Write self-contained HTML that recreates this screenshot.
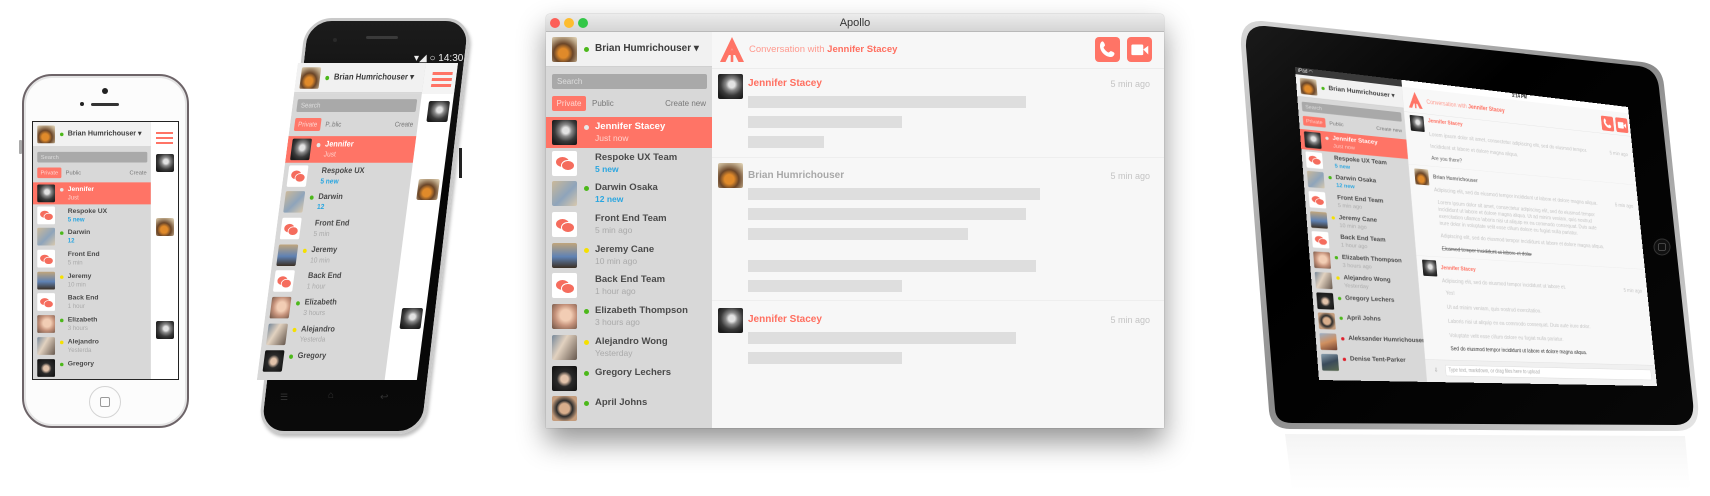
<!DOCTYPE html>
<html><head><meta charset="utf-8">
<style>
*{box-sizing:border-box;margin:0;padding:0}
body{width:1710px;height:496px;background:#fff;position:relative;overflow:hidden;font-family:"Liberation Sans",sans-serif}
.abs{position:absolute}
.av{position:absolute;width:25px;height:25px;border-radius:2px;overflow:hidden}
.aj{background:radial-gradient(circle at 55% 42%,#e2e2e2 0 16%,#8a8a8a 30%,#3a3a3a 55%,#1c1c1c 80%)}
.ab{background:radial-gradient(circle at 45% 65%,#e08a2a 0 22%,#6a4528 45%,#b9a384 75%,#e8dcc0)}
.ad{background:linear-gradient(135deg,#cbb99a,#8ea4bb 55%,#d9c9ae)}
.ajc{background:linear-gradient(#c0a57c,#5f82b4 55%,#3c3024)}
.ae{background:radial-gradient(circle at 55% 45%,#f2cdb4 0 28%,#c4917a 55%,#6a5244)}
.aa{background:linear-gradient(120deg,#76889a,#e2d2c0 40%,#66584e)}
.ag{background:radial-gradient(circle at 50% 52%,#e2c3ab 0 20%,#2a2a2a 42%,#0e0e0e)}
.ap{background:radial-gradient(circle at 50% 50%,#d8ae8c 0 28%,#2c2c2c 45%,#c49c7c 75%)}
.ak{background:linear-gradient(160deg,#9ab0c8,#d09060 50%,#704030)}
.an{background:linear-gradient(160deg,#8aa0b0,#3a4a5a 50%,#5a6a50)}
.at{background:#fff}
.at::before{content:"";position:absolute;left:16%;top:26%;width:52%;height:40%;background:#f56c5d;border-radius:50%}
.at::after{content:"";position:absolute;left:36%;top:38%;width:46%;height:36%;background:#f56c5d;border:1.5px solid #fff;border-radius:50%}
.dot{position:absolute;width:5px;height:5px;border-radius:50%}
.g{background:#4cb81a}.y{background:#f5e000}.w{background:#e8e8e8}.rd{background:#e0202c}
.sb{position:absolute;width:166px;background:#d8d8d8;overflow:hidden;transform-origin:0 0}
.sbh{position:relative;height:35px;background:#f1f1f1;border-bottom:1px solid #d0d0d0}
.sbh .av{left:6px;top:5px}
.sbh .dot{left:38px;top:15px}
.me{position:absolute;left:49px;top:11px;font-size:10px;font-weight:bold;color:#3c3c3c;white-space:nowrap}
.srch{margin:7px 5px 0 6px;height:15px;background:#a9a9a9;border-radius:2px;font-size:8px;color:#ddd;padding:3px 0 0 5px}
.tabs{position:relative;height:15px;margin-top:7px;font-size:8px;color:#777}
.tabs .pv{position:absolute;left:6px;top:0;width:34px;height:15px;background:#ff7769;color:#ffd6d0;border-radius:2px;text-align:center;padding-top:3px}
.tabs .pb{position:absolute;left:46px;top:3px}
.tabs .cn{position:absolute;right:6px;top:3px}
.rows{margin-top:6px}
.r{position:relative;height:30.7px;white-space:nowrap}
.r .av{left:6px;top:3px}
.r .dot{left:38px;top:8px}
.r b{position:absolute;left:49px;top:4px;font-size:9.5px;color:#4a4a4a}
.r em{position:absolute;left:49px;top:16px;font-style:normal;font-size:8.5px;color:#aaa}
.r em.n{color:#2aa6e0;font-weight:bold}
.r.sel{background:#ff7466}
.r.sel b{color:#fff}.r.sel em{color:#ffd2cc}
#mac{position:absolute;left:546px;top:14px;width:618px;height:414px;background:#f7f7f7;box-shadow:0 14px 28px rgba(0,0,0,.42),0 0 1px rgba(0,0,0,.4);border-radius:4px 4px 0 0;overflow:hidden}
.tb{position:absolute;left:0;top:0;width:618px;height:18px;background:linear-gradient(#ececec,#d5d5d5);border-bottom:1px solid #b9b9b9;text-align:center;font-size:11px;color:#333;line-height:18px}
.tl{position:absolute;top:4px;width:10px;height:10px;border-radius:50%}
.bar{position:absolute;left:202px;height:12px;background:#dedede}
.nm{position:absolute;left:202px;font-size:10px;font-weight:bold;white-space:nowrap}
.tm{position:absolute;right:14px;font-size:9px;color:#c4c4c4}
.cb{position:absolute;top:23px;width:25px;height:25px;background:#ff7466;border-radius:4px}
</style></head><body>

<div class="abs" style="left:22px;top:74px;width:167px;height:354px;border-radius:30px;background:#fcfcfc;border:2px solid #6d6468;box-shadow:inset 0 0 0 2px #e4e4e4"></div>
<div class="abs" style="left:19px;top:140px;width:3px;height:14px;background:#aaa;border-radius:1px"></div>
<div class="abs" style="left:102px;top:88px;width:6px;height:6px;border-radius:50%;background:#222"></div>
<div class="abs" style="left:80px;top:102px;width:4px;height:4px;border-radius:50%;background:#222"></div>
<div class="abs" style="left:91px;top:103px;width:28px;height:3px;border-radius:2px;background:#333"></div>
<div class="abs" style="left:89px;top:386px;width:32px;height:32px;border-radius:50%;border:1.5px solid #d4d4d4"></div>
<div class="abs" style="left:100px;top:397px;width:10px;height:10px;border-radius:2px;border:1px solid #999"></div>
<div class="abs" style="left:32px;top:121px;width:147px;height:259px;background:#fff;border:1px solid #222"></div>
<div class="sb" style="left:33px;top:122px;height:362px;transform:scale(0.71)">
 <div class="sbh"><div class="av ab"></div><i class="dot g"></i><span class="me">Brian Humrichouser ▾</span></div>
 <div class="srch">Search</div>
 <div class="tabs"><span class="pv">Private</span><span class="pb">Public</span><span class="cn">Create</span></div>
 <div class="rows">
  <div class="r sel"><div class="av aj"></div><i class="dot w"></i><b>Jennifer</b><em>Just</em></div>
  <div class="r"><div class="av at"></div><b>Respoke UX</b><em class="n">5 new</em></div>
  <div class="r"><div class="av ad"></div><i class="dot g"></i><b>Darwin</b><em class="n">12</em></div>
  <div class="r"><div class="av at"></div><b>Front End</b><em>5 min</em></div>
  <div class="r"><div class="av ajc"></div><i class="dot y"></i><b>Jeremy</b><em>10 min</em></div>
  <div class="r"><div class="av at"></div><b>Back End</b><em>1 hour</em></div>
  <div class="r"><div class="av ae"></div><i class="dot g"></i><b>Elizabeth</b><em>3 hours</em></div>
  <div class="r"><div class="av aa"></div><i class="dot y"></i><b>Alejandro</b><em>Yesterda</em></div>
  <div class="r"><div class="av ag"></div><i class="dot g"></i><b>Gregory</b></div>
 </div>
</div>
<div class="abs" style="left:156px;top:132px;width:17px;height:2px;background:#ff7466;box-shadow:0 5px 0 #ff7466,0 10px 0 #ff7466"></div>
<div class="av aj" style="left:156px;top:154px;width:18px;height:18px"></div>
<div class="av ab" style="left:156px;top:218px;width:18px;height:18px"></div>
<div class="av aj" style="left:156px;top:321px;width:18px;height:18px"></div>

<div class="abs" style="left:306px;top:18px;width:166px;height:416px;border-radius:26px;background:linear-gradient(#1c1c1c,#050505 40%,#0a0a0a);border:3px solid #c9c9c9;box-shadow:2px 3px 3px rgba(0,0,0,.25);transform:skewX(-6.6deg);transform-origin:0 0"></div>
<div class="abs" style="left:366px;top:36px;width:32px;height:3px;background:#3a3a3a;border-radius:2px"></div>
<div class="abs" style="left:333px;top:38px;width:4px;height:4px;background:#2a2a2a;border-radius:50%"></div>
<div class="abs" style="left:459px;top:148px;width:3px;height:30px;background:#222"></div>
<div class="abs" style="left:414px;top:53px;font-size:10px;color:#eee;white-space:nowrap">▾◢ ○ 14:30</div>
<div class="abs" style="left:298px;top:63px;width:160px;height:317px;background:#fff;overflow:hidden;transform:skewX(-7.4deg);transform-origin:0 0">
 <div class="sb" style="left:0;top:0;height:369px;transform:scale(0.77,0.86)">
  <div class="sbh"><div class="av ab"></div><i class="dot g"></i><span class="me">Brian Humrichouser ▾</span></div>
  <div class="srch">Search</div>
  <div class="tabs"><span class="pv">Private</span><span class="pb">P..blic</span><span class="cn">Create</span></div>
  <div class="rows">
   <div class="r sel"><div class="av aj"></div><i class="dot w"></i><b>Jennifer</b><em>Just</em></div>
   <div class="r"><div class="av at"></div><b>Respoke UX</b><em class="n">5 new</em></div>
   <div class="r"><div class="av ad"></div><i class="dot g"></i><b>Darwin</b><em class="n">12</em></div>
   <div class="r"><div class="av at"></div><b>Front End</b><em>5 min</em></div>
   <div class="r"><div class="av ajc"></div><i class="dot y"></i><b>Jeremy</b><em>10 min</em></div>
   <div class="r"><div class="av at"></div><b>Back End</b><em>1 hour</em></div>
   <div class="r"><div class="av ae"></div><i class="dot g"></i><b>Elizabeth</b><em>3 hours</em></div>
   <div class="r"><div class="av aa"></div><i class="dot y"></i><b>Alejandro</b><em>Yesterda</em></div>
   <div class="r"><div class="av ag"></div><i class="dot g"></i><b>Gregory</b></div>
  </div>
 </div>
 <div class="abs" style="left:0;top:0;width:160px;height:31px;background:#f4f4f4;z-index:-1"></div>
 <div class="abs" style="left:136px;top:9px;width:20px;height:3px;background:#ff7466;box-shadow:0 6px 0 #ff7466,0 12px 0 #ff7466"></div>
 <div class="av aj" style="left:136px;top:38px;width:21px;height:21px"></div>
 <div class="av ab" style="left:136px;top:116px;width:21px;height:21px"></div>
 <div class="av aj" style="left:136px;top:245px;width:21px;height:21px"></div>
</div>
<div class="abs" style="left:280px;top:392px;font-size:9px;color:#333">☰</div>
<div class="abs" style="left:328px;top:390px;font-size:10px;color:#333">⌂</div>
<div class="abs" style="left:380px;top:392px;font-size:10px;color:#333">↩</div>

<div id="mac">
 <div class="tb">Apollo
  <i class="tl" style="left:4px;background:#fc5f57"></i><i class="tl" style="left:18px;background:#fdbc2e"></i><i class="tl" style="left:32px;background:#33c748"></i>
 </div>
 <div class="sb" style="left:0;top:18px;height:396px">
  <div class="sbh"><div class="av ab"></div><i class="dot g"></i><span class="me">Brian Humrichouser ▾</span></div>
  <div class="srch">Search</div>
  <div class="tabs"><span class="pv">Private</span><span class="pb">Public</span><span class="cn">Create new</span></div>
  <div class="rows">
   <div class="r sel"><div class="av aj"></div><i class="dot w"></i><b>Jennifer Stacey</b><em>Just now</em></div>
   <div class="r"><div class="av at"></div><b>Respoke UX Team</b><em class="n">5 new</em></div>
   <div class="r"><div class="av ad"></div><i class="dot g"></i><b>Darwin Osaka</b><em class="n">12 new</em></div>
   <div class="r"><div class="av at"></div><b>Front End Team</b><em>5 min ago</em></div>
   <div class="r"><div class="av ajc"></div><i class="dot y"></i><b>Jeremy Cane</b><em>10 min ago</em></div>
   <div class="r"><div class="av at"></div><b>Back End Team</b><em>1 hour ago</em></div>
   <div class="r"><div class="av ae"></div><i class="dot g"></i><b>Elizabeth Thompson</b><em>3 hours ago</em></div>
   <div class="r"><div class="av aa"></div><i class="dot y"></i><b>Alejandro Wong</b><em>Yesterday</em></div>
   <div class="r"><div class="av ag"></div><i class="dot g"></i><b>Gregory Lechers</b></div>
   <div class="r"><div class="av ap"></div><i class="dot g"></i><b>April Johns</b></div>
  </div>
 </div>
 <div class="abs" style="left:166px;top:54px;width:452px;height:1px;background:#ececec"></div>
 <svg class="abs" style="left:174px;top:23px" width="24" height="25" viewBox="0 0 24 25"><path d="M12 0L24 25H18.5L12 11.5L5.5 25H0Z M12 12L15.5 18H13.3V25H10.7V18H8.5Z" fill="#ff7466"/></svg>
 <div class="abs" style="left:203px;top:30px;font-size:9.5px;color:#ff9a8f;white-space:nowrap">Conversation with <b style="color:#ff6f60">Jennifer Stacey</b></div>
 <div class="cb" style="left:549px"><svg width="25" height="25" viewBox="0 0 20 20"><path d="M6 3.5c.9 0 2 2.4 2 3.1s-1.1 1.1-1.1 1.8c0 1 2.9 4 4 4 .6 0 1-1.1 1.7-1.1s3 1 3 1.9c0 1.4-1.4 2.8-2.8 2.8C8.3 16 4 11.7 4 7.3 4 5 5 3.5 6 3.5z" fill="#fff"/></svg></div>
 <div class="cb" style="left:581px"><svg width="25" height="25" viewBox="0 0 20 20"><rect x="3.5" y="6" width="9.5" height="8.5" rx="1" fill="#fff"/><path d="M13 10L17 7V14Z" fill="#fff"/></svg></div>

 <div class="av aj" style="left:172px;top:60px"></div>
 <div class="nm" style="top:64px;color:#ff6f60">Jennifer Stacey</div><div class="tm" style="top:65px">5 min ago</div>
 <div class="bar" style="top:82px;width:278px"></div>
 <div class="bar" style="top:102px;width:154px"></div>
 <div class="bar" style="top:122px;width:76px"></div>
 <div class="abs" style="left:166px;top:143px;width:452px;height:1px;background:#eeeeee"></div>
 <div class="av ab" style="left:172px;top:149px"></div>
 <div class="nm" style="top:156px;color:#a8a8a8">Brian Humrichouser</div><div class="tm" style="top:157px">5 min ago</div>
 <div class="bar" style="top:174px;width:292px"></div>
 <div class="bar" style="top:194px;width:278px"></div>
 <div class="bar" style="top:214px;width:220px"></div>
 <div class="bar" style="top:246px;width:288px"></div>
 <div class="bar" style="top:266px;width:154px"></div>
 <div class="abs" style="left:166px;top:286px;width:452px;height:1px;background:#eeeeee"></div>
 <div class="av aj" style="left:172px;top:294px"></div>
 <div class="nm" style="top:300px;color:#ff6f60">Jennifer Stacey</div><div class="tm" style="top:301px">5 min ago</div>
 <div class="bar" style="top:318px;width:268px"></div>
 <div class="bar" style="top:338px;width:154px"></div>
</div>

<svg class="abs" style="left:0;top:0" width="1710" height="496">
 <defs>
  <linearGradient id="rim" x1="0" y1="0" x2="1" y2="1"><stop offset="0" stop-color="#d8d8d8"/><stop offset=".5" stop-color="#8a8a8a"/><stop offset="1" stop-color="#e6e6e6"/></linearGradient>
  <linearGradient id="refl" x1="0" y1="0" x2="0" y2="1"><stop offset="0" stop-color="#ececec"/><stop offset=".5" stop-color="#f7f7f7"/><stop offset="1" stop-color="#fff"/></linearGradient>
  <linearGradient id="blk" x1="0" y1="0" x2="1" y2="1"><stop offset="0" stop-color="#1a1a1a"/><stop offset=".35" stop-color="#000"/><stop offset="1" stop-color="#080808"/></linearGradient>
 </defs>
 <path d="M1285,434 L1685,436 L1690,490 L1292,488Z" fill="url(#refl)" opacity=".6"/>
 <path d="M1262,21 L1642,62 Q1662,65 1664,85 L1698,405 Q1700,430 1678,431 L1290,429 Q1271,429 1269,411 L1241,45 Q1240,20 1262,21Z" fill="url(#rim)"/>
 <path d="M1265,26 L1639,66 Q1657,69 1659,88 L1693,403 Q1695,424 1676,425 L1292,423 Q1276,423 1275,409 L1246,47 Q1245,25 1265,26Z" fill="url(#blk)"/>
 <circle cx="1662" cy="247" r="8" fill="#111" stroke="#333" stroke-width="1"/>
 <rect x="1658.5" y="243.5" width="7" height="7" rx="1.5" fill="none" stroke="#555" stroke-width="0.8"/>
</svg>
<div class="abs" style="left:0;top:0;width:800px;height:600px;background:#f8f8f8;overflow:hidden;transform-origin:0 0;transform:matrix3d(0.66535,0.066375,0,0.00015301,-0.015617,0.50565,0,-0.00004216,0,0,1,0,1295,67,0,1)">
 <div class="abs" style="left:0;top:0;width:236px;height:14px;background:#3a3a3a;color:#eee;font-size:10px;padding:1px 6px">iPad ◠</div>
 <div class="abs" style="left:236px;top:0;width:564px;height:14px;background:#fff;font-size:10px;color:#222;text-align:center;font-weight:bold">3:14 PM</div>
 <div class="sb" style="left:0;top:14px;height:469px;transform:scale(1.42,1.26)">
  <div class="sbh"><div class="av ab"></div><i class="dot g"></i><span class="me">Brian Humrichouser ▾</span></div>
  <div class="srch">Search</div>
  <div class="tabs"><span class="pv">Private</span><span class="pb">Public</span><span class="cn">Create new</span></div>
  <div class="rows">
   <div class="r sel"><div class="av aj"></div><i class="dot w"></i><b>Jennifer Stacey</b><em>Just now</em></div>
   <div class="r"><div class="av at"></div><b>Respoke UX Team</b><em class="n">5 new</em></div>
   <div class="r"><div class="av ad"></div><i class="dot g"></i><b>Darwin Osaka</b><em class="n">12 new</em></div>
   <div class="r"><div class="av at"></div><b>Front End Team</b><em>5 min ago</em></div>
   <div class="r"><div class="av ajc"></div><i class="dot y"></i><b>Jeremy Cane</b><em>10 min ago</em></div>
   <div class="r"><div class="av at"></div><b>Back End Team</b><em>1 hour ago</em></div>
   <div class="r"><div class="av ae"></div><i class="dot g"></i><b>Elizabeth Thompson</b><em>3 hours ago</em></div>
   <div class="r"><div class="av aa"></div><i class="dot y"></i><b>Alejandro Wong</b><em>Yesterday</em></div>
   <div class="r"><div class="av ag"></div><i class="dot g"></i><b>Gregory Lechers</b></div>
   <div class="r"><div class="av ap"></div><i class="dot g"></i><b>April Johns</b></div>
   <div class="r"><div class="av ak"></div><i class="dot rd"></i><b>Aleksander Humrichouser</b></div>
   <div class="r"><div class="av an"></div><i class="dot rd"></i><b>Denise Tent-Parker</b></div>
  </div>
 </div>
 <div style="position:absolute;left:236px;top:14px;width:564px;height:586px;font-size:11px;color:#c4c4c4;white-space:nowrap">
  <svg class="abs" style="left:12px;top:8px" width="32" height="33" viewBox="0 0 24 25"><path d="M12 0L24 25H18.5L12 11.5L5.5 25H0Z M12 12L15.5 18H13.3V25H10.7V18H8.5Z" fill="#ff7466"/></svg>
  <div class="abs" style="left:54px;top:18px;font-size:12px;color:#ff9a8f">Conversation with <b style="color:#ff6f60">Jennifer Stacey</b></div>
  <div class="abs" style="left:488px;top:12px;width:32px;height:32px;background:#ff7466;border-radius:4px"><svg width="32" height="32" viewBox="0 0 20 20"><path d="M6 3.5c.9 0 2 2.4 2 3.1s-1.1 1.1-1.1 1.8c0 1 2.9 4 4 4 .6 0 1-1.1 1.7-1.1s3 1 3 1.9c0 1.4-1.4 2.8-2.8 2.8C8.3 16 4 11.7 4 7.3 4 5 5 3.5 6 3.5z" fill="#fff"/></svg></div>
  <div class="abs" style="left:526px;top:12px;width:32px;height:32px;background:#ff7466;border-radius:4px"><svg width="32" height="32" viewBox="0 0 20 20"><rect x="3.5" y="6" width="9.5" height="8.5" rx="1" fill="#fff"/><path d="M13 10L17 7V14Z" fill="#fff"/></svg></div>
  <div class="abs" style="left:0;top:50px;width:564px;height:1px;background:#e6e6e6"></div>
  <div class="av aj" style="left:12px;top:56px;width:32px;height:32px"></div>
  <div class="abs" style="left:54px;top:58px;color:#ff6f60;font-weight:bold">Jennifer Stacey</div>
  <div class="abs" style="left:54px;top:86px">Lorem ipsum dolor sit amet, consectetur adipiscing elit, sed do eiusmod tempor.</div>
  <div class="abs" style="right:14px;top:86px">5 min ago</div>
  <div class="abs" style="left:54px;top:110px">Incididunt ut labore et dolore magna aliqua.</div>
  <div class="abs" style="left:54px;top:134px;color:#666">Are you there?</div>
  <div class="abs" style="left:0;top:156px;width:564px;height:1px;background:#eee"></div>
  <div class="av ab" style="left:12px;top:164px;width:32px;height:32px"></div>
  <div class="abs" style="left:54px;top:172px;color:#777;font-weight:bold">Brian Humrichouser</div>
  <div class="abs" style="left:54px;top:198px">Adipiscing elit, sed do eiusmod tempor incididunt ut labore et dolore magna aliqua.</div>
  <div class="abs" style="right:14px;top:198px">5 min ago</div>
  <div class="abs" style="left:60px;top:222px;line-height:14px">Lorem ipsum dolor sit amet, consectetur adipiscing elit, sed do eiusmod tempor<br>incididunt ut labore et dolore magna aliqua. Ut ad minim veniam, quis nostrud<br>exercitation ullamco laboris nisi ut aliquip ex ea commodo consequat. Duis aute<br>irure dolor in voluptate velit esse cillum dolore eu fugiat nulla pariatur.</div>
  <div class="abs" style="left:60px;top:290px">Adipiscing elit, sed do eiusmod tempor incididunt ut labore et dolore magna aliqua.</div>
  <div class="abs" style="left:60px;top:316px;color:#555;text-decoration:line-through">Eiusmod tempor incididunt ut labore et dolor</div>
  <div class="abs" style="left:0;top:338px;width:564px;height:1px;background:#eee"></div>
  <div class="av aj" style="left:12px;top:346px;width:32px;height:32px"></div>
  <div class="abs" style="left:54px;top:354px;color:#ff6f60;font-weight:bold">Jennifer Stacey</div>
  <div class="abs" style="left:54px;top:380px">Adipiscing elit, sed do eiusmod tempor incididunt ut labore et.</div>
  <div class="abs" style="right:14px;top:380px">5 min ago</div>
  <div class="abs" style="left:60px;top:404px">Yes!</div>
  <div class="abs" style="left:60px;top:432px">Ut ad minim veniam, quis nostrud exercitation.</div>
  <div class="abs" style="left:60px;top:460px">Laboris nisi ut aliquip ex ea commodo consequat. Duis aute irure dolor.</div>
  <div class="abs" style="left:60px;top:488px">Voluptate velit esse cillum dolore eu fugiat nulla pariatur.</div>
  <div class="abs" style="left:60px;top:514px;color:#333">Sed do eiusmod tempor incididunt ut labore et dolore magna aliqua.</div>
  <div class="abs" style="left:0;top:542px;width:564px;height:44px;background:#f0f0f0;border-top:1px solid #e2e2e2"></div>
  <div class="abs" style="left:18px;top:556px;color:#999">⇩</div>
  <div class="abs" style="left:44px;top:552px;width:508px;height:22px;background:#fff;border:1px solid #ddd;color:#aaa;font-size:10px;padding:4px 6px">Type text, markdown, or drag files here to upload</div>
 </div>
</div>
</body></html>
